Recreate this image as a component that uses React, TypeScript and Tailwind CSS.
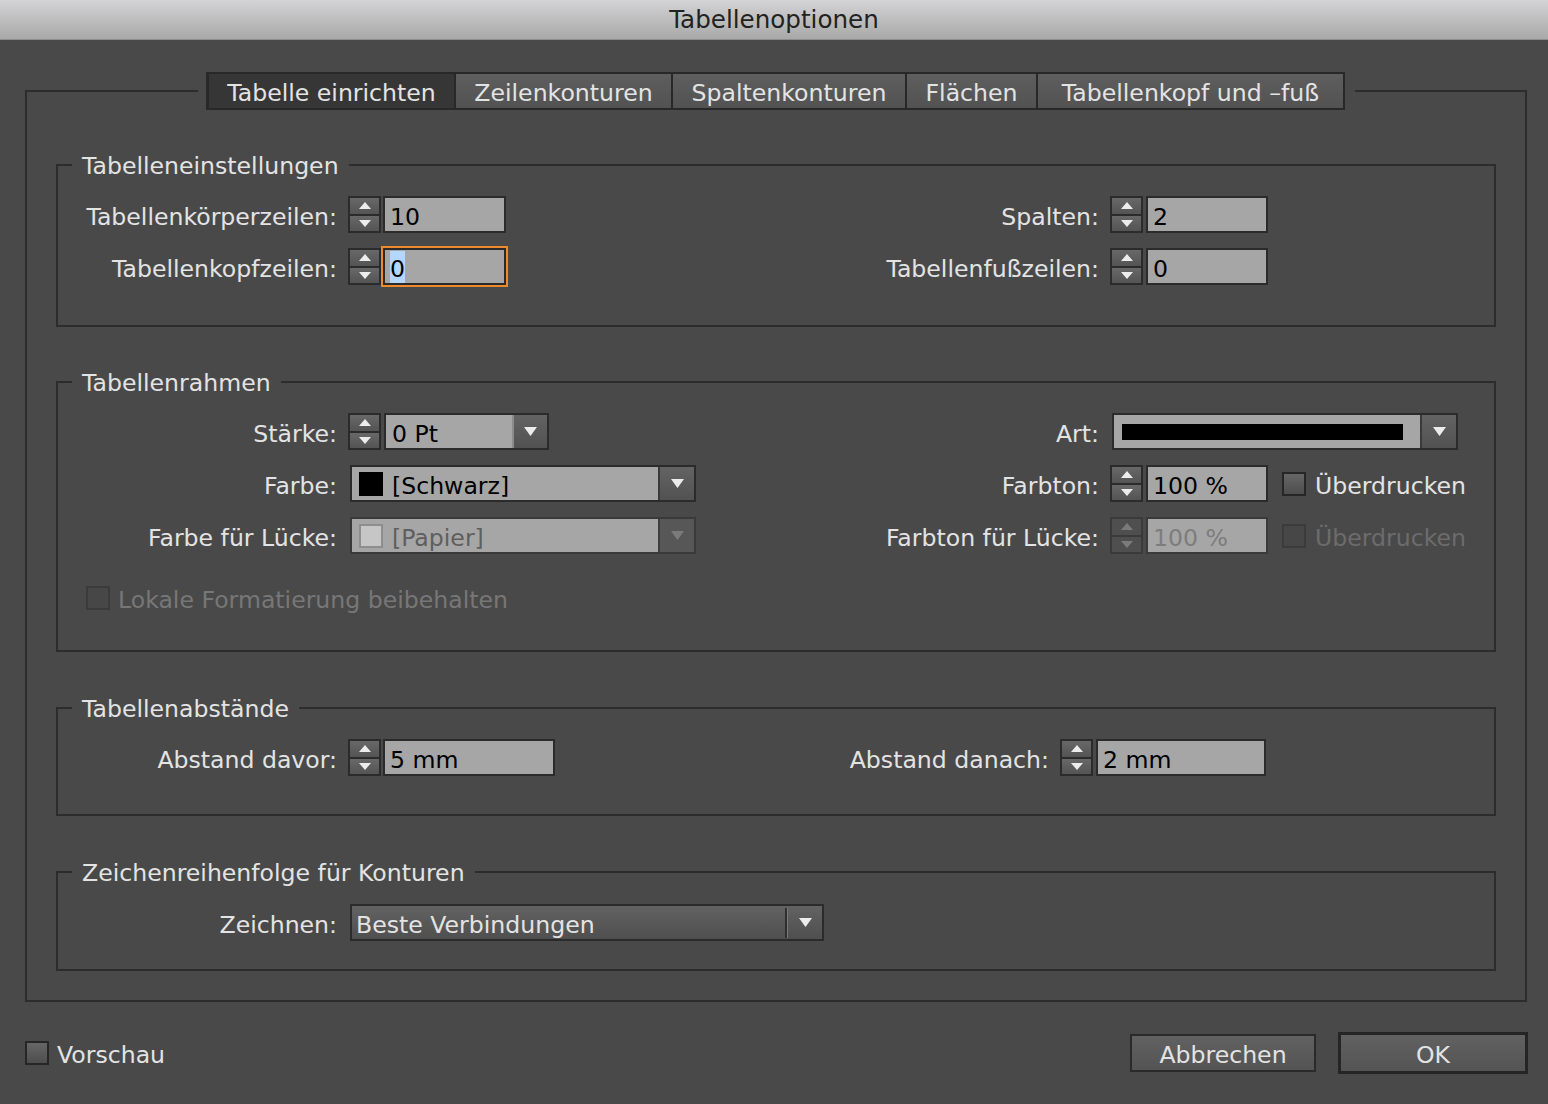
import type { ReactNode } from "react";

/** Small white triangle used by spinners and dropdowns. */
function Tri({ up, dim, big }: { up?: boolean; dim?: boolean; big?: boolean }) {
  const w = big ? 13 : 12;
  const h = big ? 9 : 7;
  return (
    <svg width={w} height={h} viewBox={`0 0 ${w} ${h}`} className="block">
      <polygon
        points={up ? `0,${h} ${w},${h} ${w / 2},0` : `0,0 ${w},0 ${w / 2},${h}`}
        fill={dim ? "#7b7b7b" : "#ececec"}
      />
    </svg>
  );
}

function Spinner({ disabled }: { disabled?: boolean }) {
  const half = disabled
    ? "flex flex-1 items-center justify-center bg-[#4f4f4f]"
    : "flex flex-1 items-center justify-center bg-gradient-to-b from-[#686868] to-[#545454]";
  return (
    <div
      className={`flex h-[37px] w-[33px] shrink-0 flex-col gap-[2px] border-2 ${
        disabled ? "border-[#3a3a3a] bg-[#3a3a3a]" : "border-[#2b2b2b] bg-[#2b2b2b]"
      }`}
    >
      <div className={half}>
        <Tri up dim={disabled} />
      </div>
      <div className={half}>
        <Tri dim={disabled} />
      </div>
    </div>
  );
}

function TextBox({
  value,
  width,
  focused,
  disabled,
}: {
  value: string;
  width: string;
  focused?: boolean;
  disabled?: boolean;
}) {
  return (
    <div
      className={`flex h-[37px] shrink-0 items-center border-2 bg-[#a6a6a6] pl-[5px] ${width} ${
        disabled ? "border-[#3a3a3a] text-[#7d7d7d]" : "border-[#2b2b2b] text-black"
      } ${focused ? "outline-2 outline-[#ef8a2c]" : ""}`}
    >
      {focused ? (
        <span className="bg-[#b3d7ff] pt-[4px] leading-[28px]">{value}</span>
      ) : (
        <span className="pt-[6px]">{value}</span>
      )}
    </div>
  );
}

function Check({ disabled }: { disabled?: boolean }) {
  return (
    <span
      className={`block h-[24px] w-[24px] shrink-0 border-2 ${
        disabled
          ? "border-[#3b3b3b] bg-[#474747]"
          : "border-[#262626] bg-gradient-to-b from-[#666666] to-[#4e4e4e]"
      }`}
    />
  );
}

function Label({ children, width }: { children: ReactNode; width: string }) {
  return <span className={`shrink-0 pt-[6px] text-right ${width}`}>{children}</span>;
}

function Group({
  title,
  className,
  children,
}: {
  title: string;
  className: string;
  children: ReactNode;
}) {
  return (
    <fieldset className={`m-0 border-2 border-[#2c2c2c] p-0 ${className}`}>
      <legend className="ml-[14px] h-[28px] px-[10px] pt-[2px] leading-[26px]">{title}</legend>
      {children}
    </fieldset>
  );
}

const tabs = [
  { name: "Tabelle einrichten", w: "w-[250px]" },
  { name: "Zeilenkonturen", w: "w-[217px]" },
  { name: "Spaltenkonturen", w: "w-[234px]" },
  { name: "Flächen", w: "w-[131px]" },
  { name: "Tabellenkopf und –fuß", w: "w-[307px]" },
];

export default function App() {
  return (
    <div className="min-h-[1104px] w-[1548px] bg-[#494949] font-['DejaVu_Sans',sans-serif] text-[23.6px] text-[#e3e3e3]">
      <div className="flex h-[40px] items-center justify-center border-b border-[#8d8d8d] bg-gradient-to-b from-[#d4d3d5] to-[#a9a9a9] pt-[2px] text-[24.6px] text-[#222]">
        Tabellenoptionen
      </div>

      <fieldset className="m-0 ml-[25px] mr-[21px] mt-[32px] border-2 border-[#2c2c2c] p-0">
        <legend className="ml-[171px] pl-[8px] pr-[10px]">
          <div className="flex h-[38px]">
            {tabs.map((t, i) => (
              <div
                key={t.name}
                className={`flex items-center justify-center border-y-2 border-r-2 border-[#282828] pt-[5px] ${t.w} ${
                  i === 0
                    ? "border-l-[3px] bg-[#363636]"
                    : "bg-gradient-to-b from-[#5e5e5e] to-[#525252]"
                }`}
              >
                {t.name}
              </div>
            ))}
          </div>
        </legend>

        <div className="px-[29px] pb-[29px] pt-[41px]">
          <Group title="Tabelleneinstellungen" className="pb-[40px]">
            <div className="flex flex-col gap-[15px] pt-[17px]">
              <div className="flex h-[37px] items-center">
                <div className="flex w-[700px] items-center">
                  <Label width="w-[279px]">Tabellenkörperzeilen:</Label>
                  <div className="ml-[11px] flex items-center gap-[2px]">
                    <Spinner />
                    <TextBox value="10" width="w-[123px]" />
                  </div>
                </div>
                <Label width="w-[341px]">Spalten:</Label>
                <div className="ml-[11px] flex items-center gap-[3px]">
                  <Spinner />
                  <TextBox value="2" width="w-[122px]" />
                </div>
              </div>
              <div className="flex h-[37px] items-center">
                <div className="flex w-[700px] items-center">
                  <Label width="w-[279px]">Tabellenkopfzeilen:</Label>
                  <div className="ml-[11px] flex items-center gap-[2px]">
                    <Spinner />
                    <TextBox value="0" width="w-[123px]" focused />
                  </div>
                </div>
                <Label width="w-[341px]">Tabellenfußzeilen:</Label>
                <div className="ml-[11px] flex items-center gap-[3px]">
                  <Spinner />
                  <TextBox value="0" width="w-[122px]" />
                </div>
              </div>
            </div>
          </Group>

          <Group title="Tabellenrahmen" className="mt-[41px] pb-[34px]">
            <div className="flex flex-col gap-[15px] pt-[17px]">
              <div className="flex h-[37px] items-center">
                <div className="flex w-[700px] items-center">
                  <Label width="w-[279px]">Stärke:</Label>
                  <div className="ml-[11px] flex items-center gap-[3px]">
                    <Spinner />
                    <div className="flex h-[37px] w-[165px] border-2 border-[#2b2b2b]">
                      <div className="flex flex-1 items-center bg-[#a6a6a6] pl-[6px] pt-[6px] text-black">
                        0 Pt
                      </div>
                      <div className="flex w-[35px] items-center justify-center border-l-2 border-[#8c8c8c] bg-gradient-to-b from-[#636363] to-[#525252]">
                        <Tri big />
                      </div>
                    </div>
                  </div>
                </div>
                <Label width="w-[341px]">Art:</Label>
                <div className="ml-[13px] flex h-[37px] w-[346px] border-2 border-[#2b2b2b]">
                  <div className="flex flex-1 items-center bg-[#a6a6a6] pl-[8px]">
                    <span className="block h-[16px] w-[281px] bg-black" />
                  </div>
                  <div className="flex w-[36px] items-center justify-center border-l-2 border-[#3a3a3a] bg-gradient-to-b from-[#636363] to-[#525252]">
                    <Tri big />
                  </div>
                </div>
              </div>

              <div className="flex h-[37px] items-center">
                <div className="flex w-[700px] items-center">
                  <Label width="w-[279px]">Farbe:</Label>
                  <div className="ml-[13px] flex h-[37px] w-[346px] border-2 border-[#2b2b2b]">
                    <div className="flex flex-1 items-center gap-[9px] bg-[#a6a6a6] pl-[7px] text-black">
                      <span className="block h-[24px] w-[24px] bg-black" />
                      <span className="pt-[6px]">[Schwarz]</span>
                    </div>
                    <div className="flex w-[36px] items-center justify-center border-l-2 border-[#3a3a3a] bg-gradient-to-b from-[#636363] to-[#525252]">
                      <Tri big />
                    </div>
                  </div>
                </div>
                <Label width="w-[341px]">Farbton:</Label>
                <div className="ml-[11px] flex items-center gap-[3px]">
                  <Spinner />
                  <TextBox value="100 %" width="w-[122px]" />
                </div>
                <div className="ml-[14px] flex items-center gap-[9px]">
                  <Check />
                  <span className="pt-[6px]">Überdrucken</span>
                </div>
              </div>

              <div className="flex h-[37px] items-center">
                <div className="flex w-[700px] items-center">
                  <Label width="w-[279px]">Farbe für Lücke:</Label>
                  <div className="ml-[13px] flex h-[37px] w-[346px] border-2 border-[#3a3a3a]">
                    <div className="flex flex-1 items-center gap-[9px] bg-[#a6a6a6] pl-[7px] text-[#5f5f5f]">
                      <span className="block h-[24px] w-[24px] border-2 border-[#8e8e8e] bg-[#c6c6c6]" />
                      <span className="pt-[6px]">[Papier]</span>
                    </div>
                    <div className="flex w-[36px] items-center justify-center border-l-2 border-[#3f3f3f] bg-[#575757]">
                      <Tri big dim />
                    </div>
                  </div>
                </div>
                <Label width="w-[341px]">Farbton für Lücke:</Label>
                <div className="ml-[11px] flex items-center gap-[3px]">
                  <Spinner disabled />
                  <TextBox value="100 %" width="w-[122px]" disabled />
                </div>
                <div className="ml-[14px] flex items-center gap-[9px] text-[#6c6c6c]">
                  <Check disabled />
                  <span className="pt-[6px]">Überdrucken</span>
                </div>
              </div>

              <div className="mt-[10px] flex h-[37px] items-center gap-[8px] pl-[28px] text-[#777777]">
                <Check disabled />
                <span className="pt-[6px]">Lokale Formatierung beibehalten</span>
              </div>
            </div>
          </Group>

          <Group title="Tabellenabstände" className="mt-[42px] pb-[38px]">
            <div className="mt-[17px] flex h-[37px] items-center">
              <div className="flex w-[700px] items-center">
                <Label width="w-[279px]">Abstand davor:</Label>
                <div className="ml-[11px] flex items-center gap-[2px]">
                  <Spinner />
                  <TextBox value="5 mm" width="w-[172px]" />
                </div>
              </div>
              <Label width="w-[291px]">Abstand danach:</Label>
              <div className="ml-[11px] flex items-center gap-[3px]">
                <Spinner />
                <TextBox value="2 mm" width="w-[170px]" />
              </div>
            </div>
          </Group>

          <Group title="Zeichenreihenfolge für Konturen" className="mt-[42px] pb-[28px]">
            <div className="mt-[18px] flex h-[37px] items-center">
              <Label width="w-[279px]">Zeichnen:</Label>
              <div className="ml-[13px] flex h-[37px] w-[474px] items-center border-2 border-[#2b2b2b] bg-gradient-to-b from-[#626262] to-[#4f4f4f]">
                <span className="flex-1 pl-[4px] pt-[6px]">Beste Verbindungen</span>
                <span className="block h-[30px] w-[2px] bg-[#2f2f2f]" />
                <span className="block h-[30px] w-[1px] bg-[#7a7a7a]" />
                <span className="flex w-[34px] justify-center">
                  <Tri big />
                </span>
              </div>
            </div>
          </Group>
        </div>
      </fieldset>

      <div className="mt-[30px] flex h-[42px] items-center justify-between pl-[25px] pr-[20px]">
        <div className="flex items-center gap-[8px]">
          <Check />
          <span className="pt-[6px]">Vorschau</span>
        </div>
        <div className="flex items-center gap-[22px]">
          <button className="flex h-[38px] w-[186px] items-center justify-center border-2 border-[#2a2a2a] bg-gradient-to-b from-[#616161] to-[#545454] pt-[5px]">
            Abbrechen
          </button>
          <button className="flex h-[42px] w-[190px] items-center justify-center border-[3px] border-[#252525] bg-gradient-to-b from-[#616161] to-[#545454] pt-[5px]">
            OK
          </button>
        </div>
      </div>
    </div>
  );
}
